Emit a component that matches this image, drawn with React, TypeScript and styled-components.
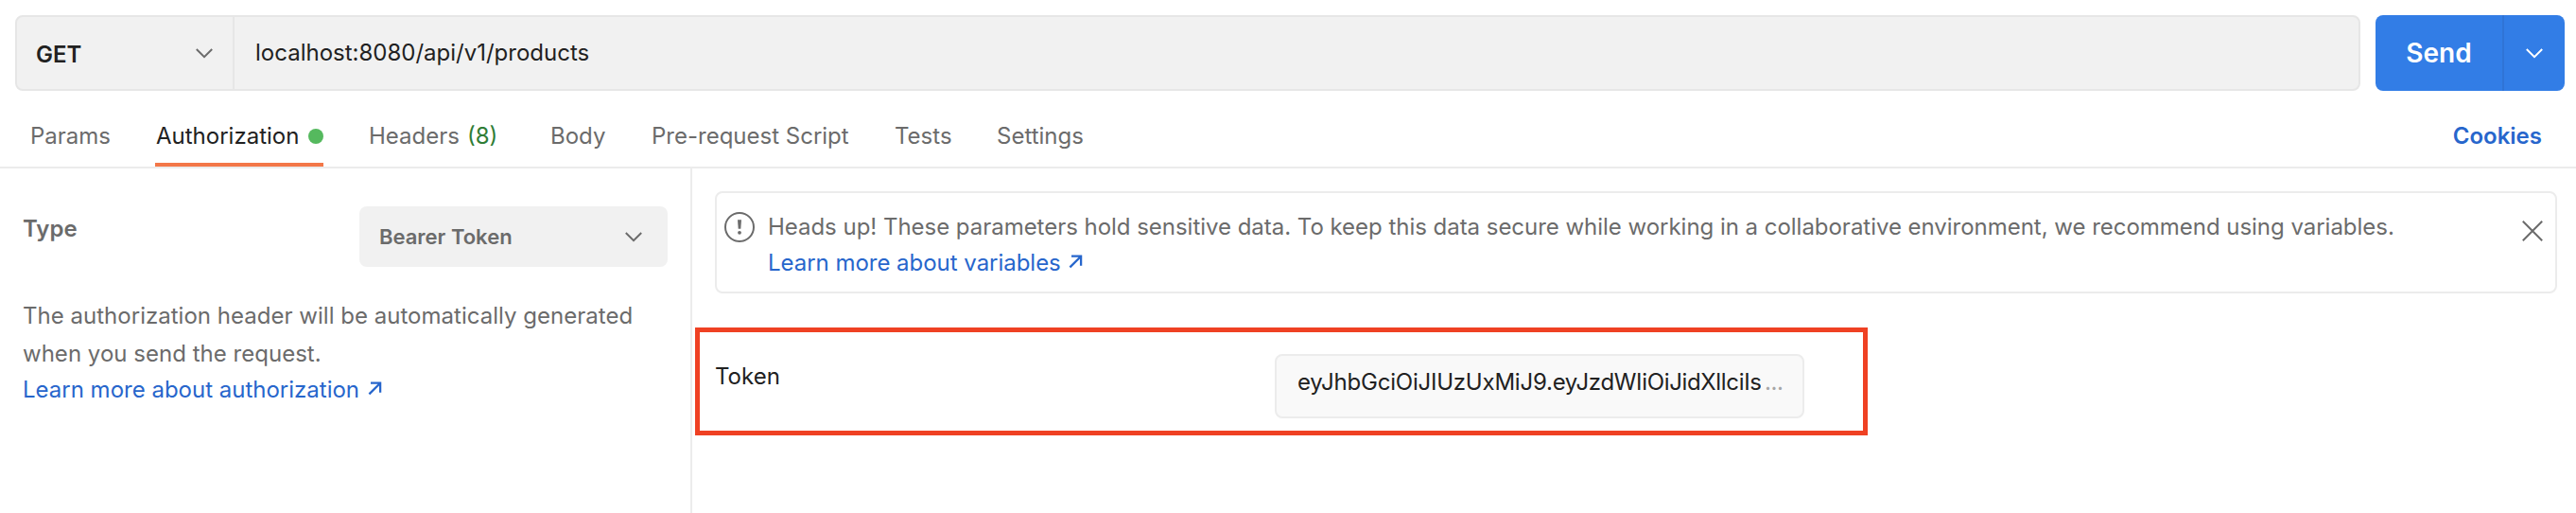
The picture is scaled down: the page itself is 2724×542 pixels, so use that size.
import React from 'react';
import styled, { createGlobalStyle } from 'styled-components';

const GlobalStyle = createGlobalStyle`
  * { box-sizing: border-box; }
  body {
    margin: 0;
    background: #fff;
    color: #212121;
    font: 400 24px/40px Inter, "Liberation Sans", sans-serif;
    overflow: hidden;
  }
`;

const Page = styled.div`
  width: 2724px;
  height: 542px;
  display: flex;
  flex-direction: column;
  padding-top: 16px;
`;

const RequestBar = styled.div`
  display: flex;
  gap: 16px;
  height: 80px;
  padding: 0 12px 0 16px;
  flex: none;
`;

const UrlGroup = styled.div`
  flex: 1;
  display: flex;
  background: #f1f1f1;
  border: 2px solid #e6e6e6;
  border-radius: 8px;
`;

const Method = styled.div`
  width: 230px;
  display: flex;
  align-items: center;
  justify-content: space-between;
  padding: 0 20px;
  border-right: 2px solid #e6e6e6;
  font-weight: 600;
`;

const MethodName = styled.span`
  padding-top: 3px;
`;

const Url = styled.div`
  padding: 18px 0 0 22px;
`;

const SendGroup = styled.div`
  display: flex;
  width: 200px;
  border-radius: 8px;
  background: #327de6;
  color: #fff;
  overflow: hidden;
`;

const SendButton = styled.div`
  width: 136px;
  border-right: 2px solid #2f74d6;
  font-size: 28px;
  font-weight: 600;
  line-height: 80px;
  text-align: center;
`;

const SendMenu = styled.div`
  flex: 1;
  display: flex;
  align-items: center;
  justify-content: center;
`;

const Tabs = styled.div`
  display: flex;
  flex: none;
  height: 82px;
  padding: 0 36px 0 32px;
  border-bottom: 2px solid #ececec;
  color: #6b6b6b;
`;

const Tab = styled.div<{ $active?: boolean; $w: number }>`
  display: flex;
  align-items: center;
  width: ${p => p.$w}px;
  margin-right: 48px;
  padding: 20px 0 0 ${p => (p.$active ? 1 : 0)}px;
  height: 80px;
  white-space: nowrap;
  color: ${p => (p.$active ? '#212121' : 'inherit')};
  border-bottom: 4px solid ${p => (p.$active ? '#f37748' : 'transparent')};
`;

const Dot = styled.span`
  width: 16px;
  height: 16px;
  margin-left: auto;
  border-radius: 50%;
  background: #55b95e;
`;

const Count = styled.span`
  margin-left: 8px;
  color: #2f7d36;
`;

const Cookies = styled.div`
  margin-left: auto;
  padding-top: 28px;
  height: 80px;
  font-weight: 600;
  color: #2766cc;
`;

const Body = styled.div`
  flex: 1;
  display: flex;
`;

const Sidebar = styled.div`
  width: 732px;
  padding: 40px 24px 0;
  border-right: 2px solid #ececec;
  color: #6b6b6b;
`;

const TypeRow = styled.div`
  display: flex;
  justify-content: space-between;
  height: 64px;
  font-weight: 600;
`;

const TypeLabel = styled.div`
  padding-top: 4px;
`;

const Select = styled.div`
  width: 326px;
  display: flex;
  align-items: center;
  justify-content: space-between;
  padding: 0 26px 0 21px;
  border-radius: 8px;
  background: #f1f1f1;
  font-size: 22px;
`;

const Hint = styled.p`
  margin: 32px 0 -1px;
  letter-spacing: 0.02px;
  white-space: nowrap;
`;

const Link = styled.div`
  display: flex;
  align-items: center;
  gap: 9px;
  line-height: 38px;
  color: #2766cc;

  svg { margin-bottom: 4px; }
`;

const Content = styled.div`
  flex: 1;
  padding: 24px 20px 0 3px;
`;

const Alert = styled.div`
  display: flex;
  height: 108px;
  margin-left: 21px;
  padding: 17px 13px 0 7px;
  border: 2px solid #ececec;
  border-radius: 8px;
  color: #6b6b6b;
`;

const AlertIcon = styled.svg`
  flex: none;
  margin: 2px 13px 0 0;
`;

const AlertText = styled.div`
  flex: 1;
  line-height: 38px;
  letter-spacing: -0.028px;
  white-space: nowrap;

  ${Link} { gap: 8px; }
`;

const CloseIcon = styled.svg`
  flex: none;
  margin-top: 12px;
`;

const TokenRow = styled.div`
  display: flex;
  justify-content: space-between;
  width: 1240px;
  height: 114px;
  margin-top: 36px;
  padding: 23px 62px 0 16px;
  border: 5px solid #ef4123;
`;

const TokenLabel = styled.div`
  padding-top: 4px;
`;

const TokenInput = styled.div`
  display: flex;
  width: 560px;
  height: 68px;
  padding: 8px 20px 0 22px;
  border: 2px solid #ececec;
  border-radius: 8px;
  background: #f9f9f9;
`;

const TokenValue = styled.span`
  width: 490px;
  overflow: hidden;
  white-space: nowrap;
`;

const TokenPart = styled.span<{ $spacing: number }>`
  letter-spacing: ${p => p.$spacing}px;
`;

const Ellipsis = styled.span`
  padding-left: 4px;
  letter-spacing: -0.4px;
  color: #a6a6a6;
`;

const Chevron = ({ color = '#6b6b6b' }: { color?: string }) => (
  <svg width="20" height="12" viewBox="0 0 20 12" fill="none" stroke={color} strokeWidth="2">
    <path d="M1.8 2 10 10.2 18.2 2" />
  </svg>
);

const ExternalArrow = () => (
  <svg width="15" height="15" viewBox="0 0 15 15" fill="none" stroke="#2766cc" strokeWidth="2.3">
    <path d="M3 1.7H13.1V11.8M13.1 1.7 1.4 13.4" />
  </svg>
);

export default function App() {
  return (
    <Page>
      <GlobalStyle />
      <RequestBar>
        <UrlGroup>
          <Method>
            <MethodName>GET</MethodName>
            <Chevron />
          </Method>
          <Url>localhost:8080/api/v1/products</Url>
        </UrlGroup>
        <SendGroup>
          <SendButton>Send</SendButton>
          <SendMenu><Chevron color="#fff" /></SendMenu>
        </SendGroup>
      </RequestBar>
      <Tabs>
        <Tab $w={84}>Params</Tab>
        <Tab $w={178} $active>Authorization<Dot /></Tab>
        <Tab $w={144}>Headers<Count>(8)</Count></Tab>
        <Tab $w={59}>Body</Tab>
        <Tab $w={209}>Pre-request Script</Tab>
        <Tab $w={60}>Tests</Tab>
        <Tab $w={94}>Settings</Tab>
        <Cookies>Cookies</Cookies>
      </Tabs>
      <Body>
        <Sidebar>
          <TypeRow>
            <TypeLabel>Type</TypeLabel>
            <Select>Bearer Token<Chevron /></Select>
          </TypeRow>
          <Hint>
            The authorization header will be automatically generated
            <br />
            when you send the request.
          </Hint>
          <Link>Learn more about authorization<ExternalArrow /></Link>
        </Sidebar>
        <Content>
          <Alert>
            <AlertIcon width="34" height="34" viewBox="0 0 34 34" fill="none" stroke="#6b6b6b" strokeWidth="2">
              <circle cx="17" cy="17" r="15" />
              <path d="M15 9.2h4l-.7 9.6h-2.6z" fill="#6b6b6b" stroke="none" />
              <circle cx="17" cy="22.8" r="1.9" fill="#6b6b6b" stroke="none" />
            </AlertIcon>
            <AlertText>
              Heads up! These parameters hold sensitive data. To keep this data secure while working in a collaborative environment, we recommend using variables.
              <Link>Learn more about variables<ExternalArrow /></Link>
            </AlertText>
            <CloseIcon width="22" height="22" viewBox="0 0 22 22" fill="none" stroke="#6b6b6b" strokeWidth="2">
              <path d="M.8.8 21.2 21.2M21.2.8.8 21.2" />
            </CloseIcon>
          </Alert>
          <TokenRow>
            <TokenLabel>Token</TokenLabel>
            <TokenInput>
              <TokenValue>
                <TokenPart $spacing={-0.22}>eyJhbGciOiJIUzUxMiJ9.</TokenPart>
                <TokenPart $spacing={-0.34}>eyJzdWIiOiJidXllciIs</TokenPart>
              </TokenValue>
              <Ellipsis>...</Ellipsis>
            </TokenInput>
          </TokenRow>
        </Content>
      </Body>
    </Page>
  );
}
